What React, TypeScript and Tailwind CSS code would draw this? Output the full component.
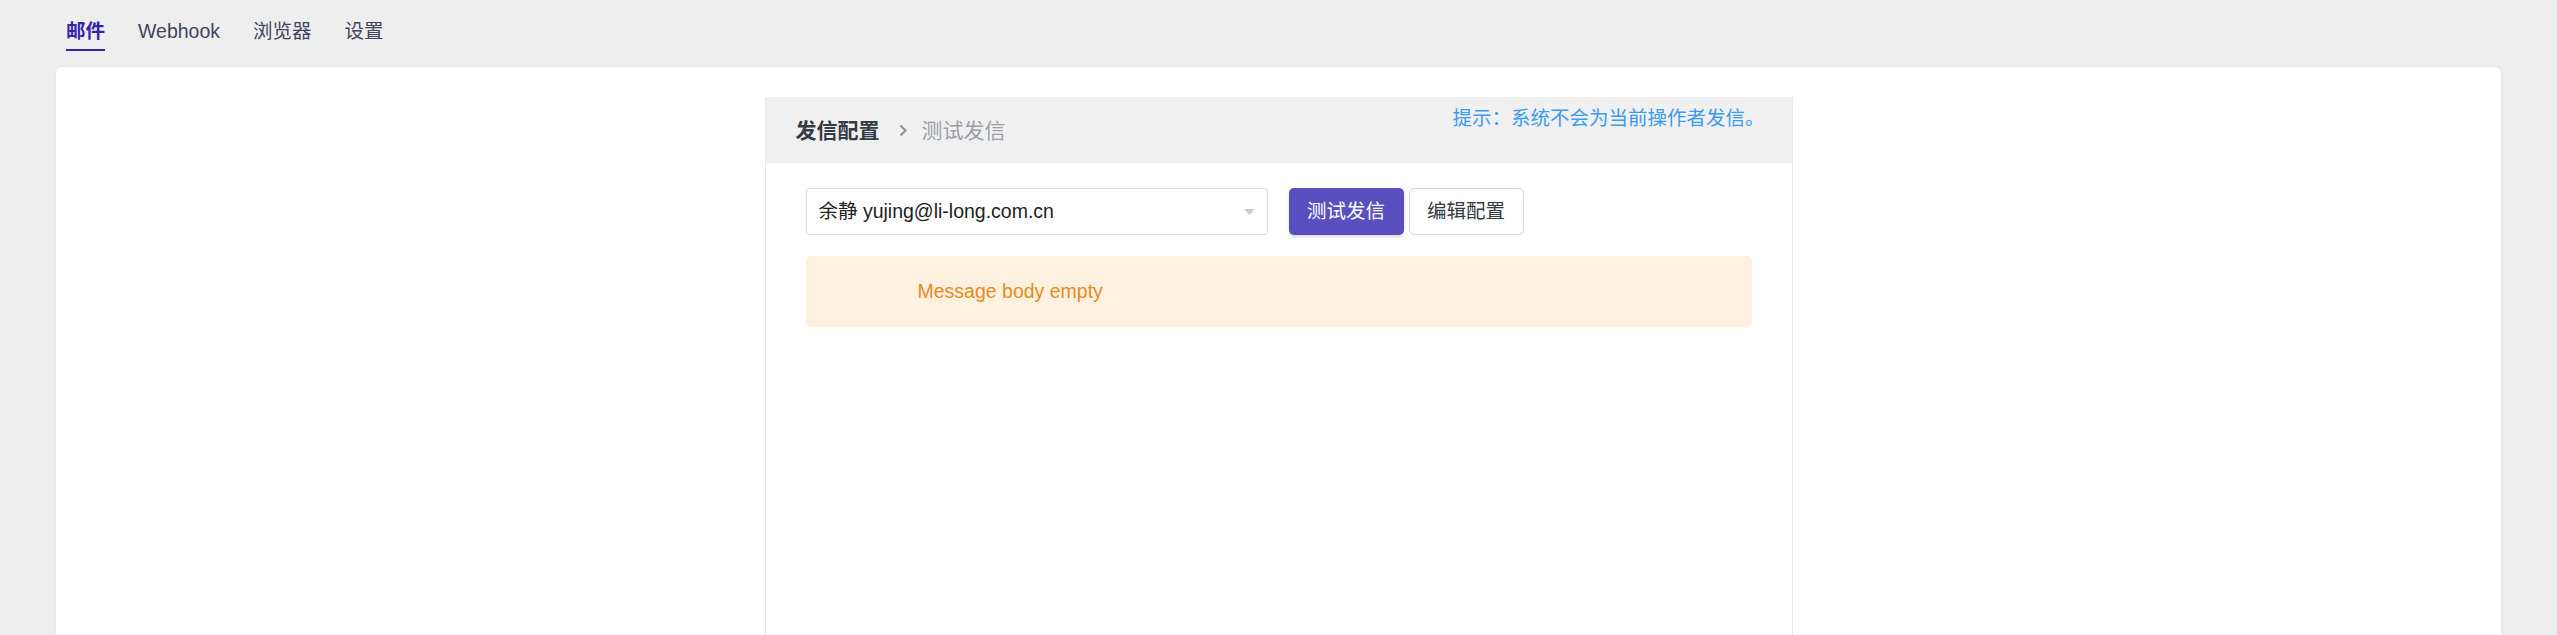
import React from "react";

const FONT = { fontFamily: '"Liberation Sans", Arial, "Noto Sans CJK SC", sans-serif' };

export default function App() {
  const tabs = ["邮件", "Webhook", "浏览器", "设置"];
  return (
    <div className="h-[635px] w-full overflow-hidden bg-[#eeeeee] flex flex-col px-[56px]" style={FONT}>
      <div className="flex pl-[10px] gap-[33px] shrink-0">
        {tabs.map((t, i) => (
          <div key={t} className="flex flex-col pt-[17px]">
            <span
              className={
                i === 0
                  ? "text-[19.5px] leading-[28px] font-bold text-[#3524b0]"
                  : "text-[19.5px] leading-[28px] text-[#3f4560]"
              }
            >
              {t}
            </span>
            <div className={i === 0 ? "mt-[4px] h-[2px] bg-[#3323ad]" : "mt-[4px] h-[2px]"} />
          </div>
        ))}
      </div>
      <div className="mt-[16px] flex-1 bg-white rounded-t-[6px] shadow-[0_0_4px_rgba(0,0,0,0.06)] flex justify-center pt-[30px]">
        <div className="w-[1028px] h-full border-x border-[#e8e8e8] flex flex-col">
          <div className="h-[66px] bg-[#f0f0f0] border-b border-[#e9e9e9] flex justify-between pl-[30px] pr-[27px]">
            <div className="flex items-center pt-[2px]">
              <span className="text-[21px] font-bold text-[#353a44]">发信配置</span>
              <svg className="ml-[18px] mr-[14px]" width="10" height="13" viewBox="0 0 10 13">
                <path d="M2.5 1.5 L7.5 6.5 L2.5 11.5" fill="none" stroke="#8a8f99" strokeWidth="2" />
              </svg>
              <span className="text-[21px] text-[#9a9ea8]">测试发信</span>
            </div>
            <div className="pt-[8px] text-[19.5px] leading-[26px] text-[#3a9bf0]">提示：系统不会为当前操作者发信。</div>
          </div>
          <div className="px-[40px] pt-[25px]">
            <div className="flex items-center">
              <div className="w-[462px] h-[47px] border border-[#dcdfe6] rounded-[3px] flex items-center justify-between pl-[12px] pr-[12px]">
                <span className="text-[19.5px] text-[#222222] pt-[1px]">余静 yujing@li-long.com.cn</span>
                <svg width="11" height="6" viewBox="0 0 11 6">
                  <path d="M0 0 L11 0 L5.5 6 Z" fill="#c8cad0" />
                </svg>
              </div>
              <button className="ml-[21px] w-[115px] h-[47px] rounded-[5px] bg-[#5a4fbe] text-white text-[19.5px] shadow-[0_2px_3px_rgba(0,0,0,0.15)]">
                测试发信
              </button>
              <button className="ml-[5px] w-[115px] h-[47px] rounded-[5px] bg-white border border-[#d6d8e1] text-[#353a44] text-[19.5px]">
                编辑配置
              </button>
            </div>
            <div className="mt-[21px] h-[71px] rounded-[5px] bg-[#fef1df] flex items-center pl-[112px]">
              <span className="text-[19.5px] text-[#ea8a1c]">Message body empty</span>
            </div>
          </div>
        </div>
      </div>
    </div>
  );
}
